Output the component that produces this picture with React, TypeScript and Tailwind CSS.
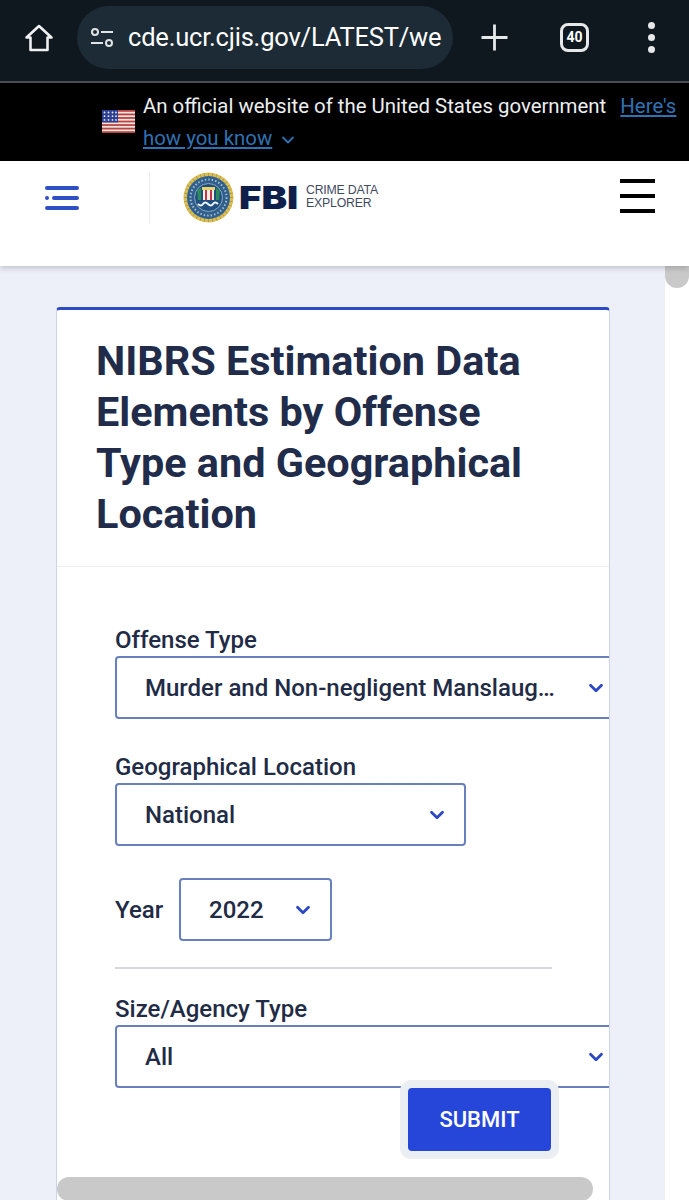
import { ChevronDown } from 'lucide-react';

const roboto = { fontFamily: 'Roboto, sans-serif' };

function Seal() {
  const spokes = Array.from({ length: 36 }, (_, i) => (i * 360) / 36);
  return (
    <svg width="51" height="51" viewBox="0 0 51 51">
      <circle cx="25.5" cy="25.5" r="25" fill="#d9bf5a" />
      {spokes.map(a => (
        <line key={a} x1="25.5" y1="1" x2="25.5" y2="4" stroke="#b59a3a" strokeWidth="1" transform={`rotate(${a} 25.5 25.5)`} />
      ))}
      <circle cx="25.5" cy="25.5" r="21.5" fill="#2f5f8f" />
      <circle cx="25.5" cy="25.5" r="14" fill="#1f4f80" stroke="#8fa9b8" strokeWidth="1" />
      <circle cx="25.5" cy="25.5" r="18" fill="none" stroke="#a9bcc0" strokeWidth="2" strokeDasharray="1.5 2" />
      <path d="M19 15h13v3H19z" fill="#e8d46a" />
      <path d="M20 18h11v10H20z" fill="#f4f0e4" />
      <path d="M22 18h2v10h-2zM27 18h2v10h-2z" fill="#c8324a" />
      <path d="M14 18l4-2v12h-3z" fill="#2e8a5a" />
      <path d="M37 18l-4-2v12h3z" fill="#2e8a5a" />
      <path d="M15 32q3 3 5 0t5 0 5 0 5 0" fill="none" stroke="#eef2f0" strokeWidth="2" />
    </svg>
  );
}

function Flag() {
  const stripes = [0, 2, 4, 6, 8, 10, 12];
  return (
    <svg width="33" height="23" viewBox="0 0 33 23">
      <rect width="33" height="23" fill="#f3e4df" />
      {stripes.map(s => (
        <rect key={s} y={s * 1.77} width="33" height="1.77" fill="#b8433f" />
      ))}
      <rect width="16" height="12.4" fill="#2c3f92" />
      {[2.5, 6.2, 9.9].map(y =>
        [2.5, 6.5, 10.5, 14].map(x => <circle key={`${x}-${y}`} cx={x} cy={y} r="0.9" fill="#e8ecf8" />),
      )}
    </svg>
  );
}

function SelectBox({ label, width, textWidth }: { label: string; width: string; textWidth?: string }) {
  return (
    <div className={`flex items-center h-[63px] shrink-0 rounded-[4px] border-2 border-[#6880bc] bg-white pl-[28px] ${width}`}>
      <span className={`text-[24px] font-medium text-[#212b45] whitespace-nowrap leading-none ${textWidth ?? 'flex-1'}`}>{label}</span>
      <ChevronDown className="w-[22px] h-[22px] text-[#2b48c4] shrink-0" strokeWidth={3} />
    </div>
  );
}

export default function App() {
  return (
    <div className="w-[689px] h-[1200px] overflow-hidden flex flex-col bg-white" style={roboto}>
      {/* browser toolbar */}
      <div className="h-[83px] shrink-0 flex items-start bg-[#10181f] border-b-2 border-[#4a4e52] pt-[6px]">
        <div className="w-[77px] h-[63px] shrink-0 flex items-center justify-center">
          <svg width="30" height="30" viewBox="0 0 30 30" fill="none" stroke="#eef0f2" strokeWidth="2.6" strokeLinejoin="round">
            <path d="M15 3 L27.5 14.5 H23.5 V27 H6.5 V14.5 H2.5 Z" />
          </svg>
        </div>
        <div className="w-[376px] h-[63px] shrink-0 flex items-center rounded-full bg-[#1c2b35] pl-[13px]">
          <svg width="24" height="24" viewBox="0 0 24 24" fill="none" stroke="#dfe3e6" strokeWidth="2">
            <circle cx="5" cy="6" r="3" />
            <path d="M11 6h12M1 17h12" />
            <circle cx="19" cy="17" r="3" />
          </svg>
          <span className="ml-[14px] text-[25.5px] tracking-[-0.2px] text-white whitespace-nowrap">cde.ucr.cjis.gov/LATEST/we</span>
        </div>
        <div className="flex-1 h-[63px] flex items-center">
          <svg className="ml-[27px]" width="29" height="29" viewBox="0 0 29 29" stroke="#e6e8ea" strokeWidth="2.8">
            <path d="M14.5 1.5v26M1.5 14.5h26" />
          </svg>
          <div className="ml-[51px] w-[29px] h-[29px] rounded-[8px] border-[3px] border-[#e6e8ea] flex items-center justify-center text-[14px] font-bold text-white">40</div>
          <div className="ml-[59px] flex flex-col gap-[5px]">
            <div className="w-[7px] h-[7px] rounded-full bg-[#e6e8ea]" />
            <div className="w-[7px] h-[7px] rounded-full bg-[#e6e8ea]" />
            <div className="w-[7px] h-[7px] rounded-full bg-[#e6e8ea]" />
          </div>
        </div>
      </div>

      {/* gov banner */}
      <div className="h-[78px] shrink-0 bg-black flex items-start pl-[102px] pr-[10px]">
        <div className="mt-[27px] shrink-0"><Flag /></div>
        <p className="ml-[8px] mt-[7px] text-[20.4px] leading-[32px] text-[#eceef0]">
          An official website of the United States government <a className="ml-[9px] underline text-[#2f72b4]">Here's</a> <a className="underline text-[#2f72b4]">how you know</a>
          <ChevronDown className="inline ml-[6px] w-[20px] h-[20px] text-[#2f72b4]" strokeWidth={2.2} />
        </p>
      </div>

      {/* site header */}
      <div className="relative z-10 h-[105px] shrink-0 bg-white shadow-[0_2px_6px_rgba(0,0,0,0.2)] flex items-start">
        <div className="ml-[45px] mt-[25px] w-[34px] flex flex-col gap-[6px]">
          <div className="h-[4px] rounded-full bg-[#2f4fc7]" />
          <div className="flex gap-[3px]">
            <div className="w-[4px] h-[4px] rounded-full bg-[#2f4fc7]" />
            <div className="flex-1 h-[4px] rounded-full bg-[#2f4fc7]" />
          </div>
          <div className="h-[4px] rounded-full bg-[#2f4fc7]" />
        </div>
        <div className="ml-[70px] mt-[11px] w-px h-[52px] bg-[#eceef0]" />
        <div className="ml-[33px] mt-[11px]"><Seal /></div>
        <span className="ml-[5px] mt-[21px] w-[59px] text-[32px] leading-[32px] font-black text-[#0f1f4b] origin-left scale-x-[1.2]" style={{ fontFamily: 'Inter, sans-serif' }}>FBI</span>
        <div className="ml-[8px] mt-[23px] text-[12.3px] leading-[13px] tracking-[-0.2px] text-[#3f4a5e]" style={{ fontFamily: '"Liberation Sans", sans-serif' }}>
          <div>CRIME DATA</div>
          <div>EXPLORER</div>
        </div>
        <div className="ml-auto mr-[34px] mt-[18px] w-[35px] flex flex-col gap-[11px]">
          <div className="h-[4px] bg-black" />
          <div className="h-[4px] bg-black" />
          <div className="h-[4px] bg-black" />
        </div>
      </div>

      <div className="flex-1 min-h-0 flex">
        {/* page */}
        <div className="w-[665px] shrink-0 bg-[#edf0f8] pl-[56px] pt-[41px]">
          <div className="w-[554px] h-[900px] overflow-hidden bg-white border-x border-[#ccd5ea] border-t-[3px] border-t-[#2b4cc4] rounded-t-[4px]">
            <div className="h-[257px] border-b border-[#eceef2] pl-[39px] pt-[26px]">
              <h1 className="text-[41.4px] leading-[51px] font-bold text-[#212b4a] whitespace-nowrap">
                NIBRS Estimation Data<br />Elements by Offense<br />Type and Geographical<br />Location
              </h1>
            </div>
            <div className="pl-[58px] pt-[59px]">
              <div className="text-[24px] leading-[28px] font-medium text-[#212b45] mb-[2px]">Offense Type</div>
              <SelectBox label="Murder and Non-negligent Manslaug…" width="w-[540px]" textWidth="w-[440px]" />

              <div className="mt-[34px] text-[24px] leading-[28px] font-medium text-[#212b45] mb-[2px]">Geographical Location</div>
              <SelectBox label="National" width="w-[351px]" textWidth="w-[281px]" />

              <div className="mt-[32px] flex items-center">
                <span className="w-[64px] text-[24px] font-medium text-[#212b45]">Year</span>
                <SelectBox label="2022" width="w-[153px]" textWidth="w-[83px]" />
              </div>

              <div className="mt-[26px] w-[437px] h-[2px] bg-[#d6d8dc]" />

              <div className="mt-[26px] text-[24px] leading-[28px] font-medium text-[#212b45] mb-[2px]">Size/Agency Type</div>
              <SelectBox label="All" width="w-[540px]" textWidth="w-[440px]" />

              <button className="block ml-[293px] w-[143px] h-[63px] rounded-[4px] bg-[#2546d8] ring-8 ring-[#ebeef2] text-[22px] font-medium text-white relative">SUBMIT</button>

              <div className="mt-[26px] -ml-[58px] w-[536px] h-[24px] rounded-full bg-[#c9c9c9]" />
            </div>
          </div>
        </div>
        {/* vertical scrollbar */}
        <div className="flex-1 bg-white">
          <div className="h-[22px] rounded-b-full bg-[#c9c9c9]" />
        </div>
      </div>
    </div>
  );
}
